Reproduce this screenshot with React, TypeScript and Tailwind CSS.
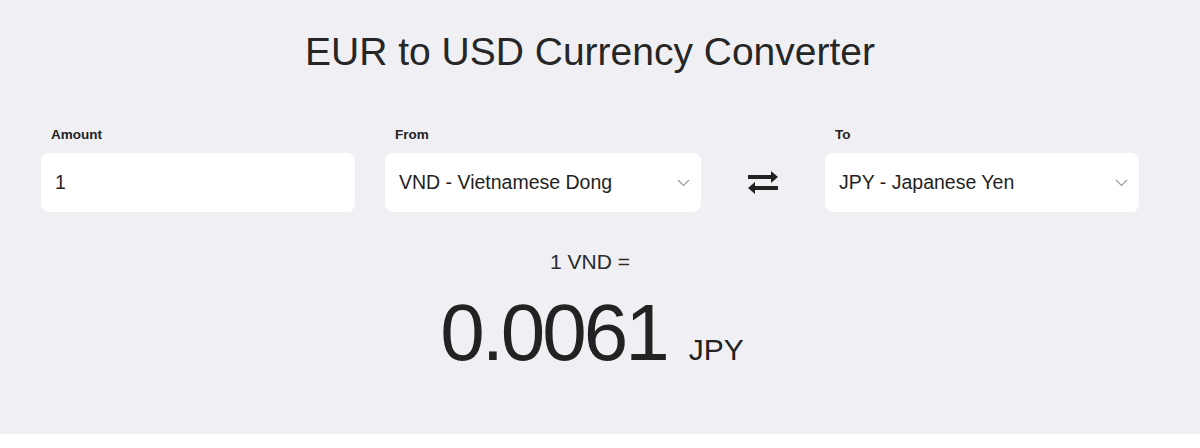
import React from 'react'

function SwapIcon() {
  return (
    <svg width="30" height="23" viewBox="0 0 30 23" fill="#222">
      <rect x="0" y="4" width="25" height="4" />
      <polygon points="23,0 30,6 23,12" />
      <rect x="5" y="15" width="25" height="4" />
      <polygon points="7,11 0,17 7,23" />
    </svg>
  )
}

function Chevron() {
  return (
    <svg width="13" height="8" viewBox="0 0 13 8" fill="none">
      <polyline points="1,1 6.5,6.5 12,1" stroke="#999" strokeWidth="1.1" />
    </svg>
  )
}

function Field({ label, width, value, select }: { label: string; width: string; value: string; select?: boolean }) {
  return (
    <div className={width}>
      <div className="text-[13.5px] leading-[16px] font-bold text-[#222] pl-[10px] mb-[10px]">{label}</div>
      <div className="h-[59px] bg-white rounded-[8px] flex items-center justify-between pl-[14px] pr-[11px]">
        <span className="text-[19.5px] text-[#1f1f1f]">{value}</span>
        {select && <Chevron />}
      </div>
    </div>
  )
}

export default function App() {
  return (
    <div className="w-[1200px] h-[448px] bg-white font-[family-name:Liberation_Sans,Arial,sans-serif] text-[#222]">
      <div className="h-[434px] bg-[#f0f0f4]">
        <div className="w-[1180px] px-[41px] pt-[28px]">
          <h1 className="text-center text-[39px] leading-[47px] text-[#262626]">
            EUR to USD Currency Converter
          </h1>

          <div className="flex items-end mt-[52px]">
            <Field label="Amount" width="w-[314px]" value="1" />
            <div className="w-[30px]" />
            <Field label="From" width="w-[316px]" value="VND - Vietnamese Dong" select />
            <div className="w-[124px] h-[59px] flex items-center justify-center">
              <SwapIcon />
            </div>
            <Field label="To" width="w-[314px]" value="JPY - Japanese Yen" select />
          </div>

          <div className="text-center mt-[38px]">
            <div className="text-[21px] leading-[24px] text-[#2a2a2a]">1 VND =</div>
            <div className="flex items-baseline justify-center mt-[16px] ml-[4px]">
              <span className="text-[80px] leading-[86px] tracking-[-3px] text-[#222]">0.0061</span>
              <span className="text-[30px] ml-[22px] text-[#222]">JPY</span>
            </div>
          </div>
        </div>
      </div>
    </div>
  )
}
